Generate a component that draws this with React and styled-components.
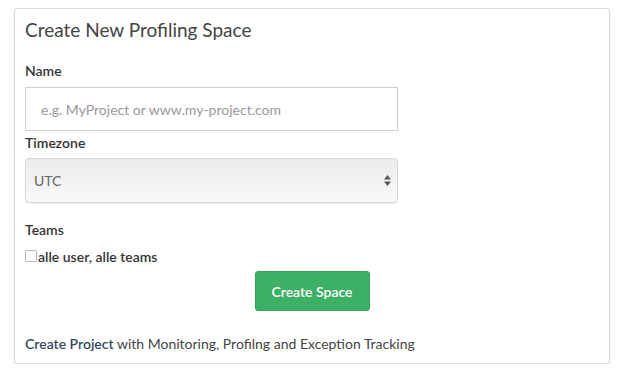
import React from "react";
import styled, { createGlobalStyle } from "styled-components";

const Global = createGlobalStyle`
  html, body { margin: 0; padding: 0; background: #fff; }
  body { font-family: Lato, "Open Sans", sans-serif; color: #333; }
  * { box-sizing: border-box; }
`;

const Page = styled.div`
  padding: 8px 0 0 14px;
`;

const Card = styled.div`
  width: 596px;
  height: 356px;
  border: 1px solid #dcdcdc;
  border-radius: 3px;
  box-shadow: 0 1px 2px rgba(0, 0, 0, 0.12);
  padding: 11px 10px 0;
  display: flex;
  flex-direction: column;
  align-items: flex-start;
`;

const Title = styled.h3`
  margin: 0;
  font-size: 19px;
  line-height: 20px;
  font-weight: 400;
  color: #444;
`;

const Label = styled.label`
  display: block;
  margin-top: ${(p) => p.$mt}px;
  font-size: 14px;
  line-height: 20px;
  font-weight: 600;
  color: #333;
`;

const TextInput = styled.input`
  display: block;
  width: 373px;
  height: 44px;
  margin-top: 6px;
  padding: 0 15px;
  border: 1px solid #cfcfcf;
  border-radius: 0;
  font-family: inherit;
  font-size: 14px;
  color: #555;
  outline: none;
  &::placeholder { color: #999; }
`;

const SelectWrap = styled.div`
  position: relative;
  margin-top: 5px;
  width: 373px;
  height: 45px;
`;

const Select = styled.select`
  appearance: none;
  -webkit-appearance: none;
  width: 100%;
  height: 100%;
  padding: 0 8px;
  border: 1px solid #d6d6d6;
  border-radius: 4px;
  background: linear-gradient(#ececec, #f9f9f9);
  box-shadow: 0 1px 1px rgba(0, 0, 0, 0.06);
  font-family: inherit;
  font-size: 14px;
  color: #666;
  outline: none;
`;

const Arrows = styled.svg`
  position: absolute;
  right: 7px;
  top: 17px;
  pointer-events: none;
`;

const CheckRow = styled.label`
  display: flex;
  align-items: center;
  margin-top: 6px;
  height: 20px;
  font-size: 14px;
  font-weight: 600;
  color: #333;
`;

const Box = styled.input`
  appearance: none;
  -webkit-appearance: none;
  width: 12px;
  height: 12px;
  margin: 0 1px 0 0;
  border: 1px solid #b5b5b5;
  border-radius: 2px;
  background: #fff;
`;

const ButtonRow = styled.div`
  align-self: stretch;
  display: flex;
  justify-content: center;
  margin-top: 5px;
`;

const Button = styled.button`
  width: 115px;
  height: 40px;
  border: 1px solid #35a05a;
  border-radius: 3px;
  background: #3cb064;
  color: #fff;
  font-family: inherit;
  font-size: 14px;
  font-weight: 600;
`;

const Footer = styled.p`
  margin: 23px 0 0;
  font-size: 14px;
  line-height: 20px;
  color: #444;
`;

const Link = styled.a`
  color: #34495e;
  font-weight: 600;
  text-decoration: none;
`;

export default function App() {
  return (
    <>
      <Global />
      <Page>
        <Card>
          <Title>Create New Profiling Space</Title>
          <Label $mt={21}>Name</Label>
          <TextInput placeholder="e.g. MyProject or www.my-project.com" />
          <Label $mt={2}>Timezone</Label>
          <SelectWrap>
            <Select defaultValue="UTC">
              <option>UTC</option>
            </Select>
            <Arrows width="7" height="11" viewBox="0 0 7 11">
              <path d="M3.5 0 L7 4.5 L0 4.5 Z" fill="#555" />
              <path d="M0 6.5 L7 6.5 L3.5 11 Z" fill="#555" />
            </Arrows>
          </SelectWrap>
          <Label $mt={17}>Teams</Label>
          <CheckRow>
            <Box type="checkbox" />
            alle user, alle teams
          </CheckRow>
          <ButtonRow>
            <Button>Create Space</Button>
          </ButtonRow>
          <Footer>
            <Link href="#">Create Project</Link> with Monitoring, Profilng and Exception Tracking
          </Footer>
        </Card>
      </Page>
    </>
  );
}
